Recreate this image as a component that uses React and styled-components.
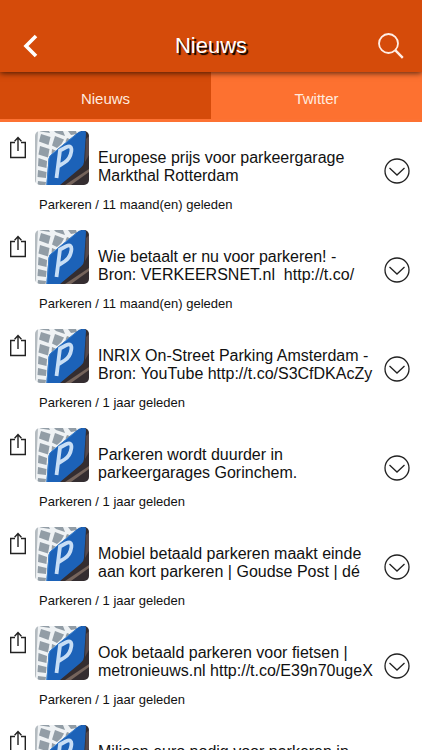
import React from 'react';
import styled, {createGlobalStyle} from 'styled-components';

const GlobalStyle = createGlobalStyle`
  * {
    box-sizing: border-box;
  }
  body {
    margin: 0;
    background: #fff;
    color: #111;
    font-family: 'Liberation Sans', Arial, Helvetica, sans-serif;
  }
  button {
    margin: 0;
    padding: 0;
    border: 0;
    background: none;
    color: inherit;
    font: inherit;
    cursor: pointer;
  }
`;

const Screen = styled.div`
  display: flex;
  flex-direction: column;
  height: 100vh;
  overflow: hidden;
`;

const Header = styled.header`
  position: relative;
  z-index: 1;
  flex: none;
  display: grid;
  grid-template-columns: 48px 1fr 48px;
  align-items: center;
  padding: 20px 7px 0;
  height: 72px;
  background: #d54b0a;
  color: #fff;
  box-shadow: 0 1px 6px rgba(0, 0, 0, 0.7);
`;

const Title = styled.h1`
  margin: 0;
  text-align: center;
  font-size: 22px;
  font-weight: normal;
  line-height: 26px;
  text-shadow: 2px 2px 1px #000;
`;

const HeaderButton = styled.button`
  display: flex;
  justify-content: center;
`;

const Tabs = styled.nav`
  flex: none;
  display: grid;
  grid-template-columns: 1fr 1fr;
  border-bottom: 3px solid #fd7233;
`;

const Tab = styled.button`
  height: 47px;
  padding-top: 6px;
  background: ${props => (props.$active ? '#d54b0a' : '#fd7130')};
  color: #ffeadf;
  font-size: 15px;
`;

const List = styled.main`
  flex: 1;
  min-height: 0;
  padding-top: 9px;
  overflow-y: auto;
  scrollbar-width: none;
`;

const Item = styled.article`
  display: grid;
  grid-template-columns: 35px 54px 1fr 46px;
  grid-template-rows: 54px 45px;
`;

const ShareButton = styled.button`
  place-self: start;
  padding: 5px 0 0 9px;
  line-height: 0;
`;

const Headline = styled.h2`
  align-self: end;
  display: -webkit-box;
  -webkit-box-orient: vertical;
  -webkit-line-clamp: 2;
  overflow: hidden;
  margin: 0 0 0 9px;
  font-size: 16px;
  font-weight: normal;
  line-height: 18px;
`;

const ExpandButton = styled.button`
  place-self: end start;
  padding: 0 0 1px 8px;
  line-height: 0;
`;

const Meta = styled.p`
  grid-column: 2 / -1;
  margin: 12px 0 0 4px;
  font-size: 13px;
  line-height: 16px;
`;

const Thumb = styled.svg`
  display: block;
  width: 54px;
  height: 54px;
  border-radius: 5px;
`;

const BackIcon = () => (
  <svg width="16" height="24" viewBox="0 0 16 24" fill="none" stroke="#fff" strokeWidth="3.6">
    <path d="M13 2L3 12l10 10" />
  </svg>
);

const SearchIcon = () => (
  <svg width="26" height="26" viewBox="0 0 26 26" fill="none" stroke="#ffeee6" strokeWidth="1.8">
    <circle cx="10.5" cy="10.5" r="9.5" />
    <path d="M17.2 17.2l7.6 7.6" strokeWidth="2.4" />
  </svg>
);

const ShareIcon = () => (
  <svg width="18" height="23" viewBox="0 0 18 23" fill="none" stroke="#222" strokeWidth="1.4">
    <path d="M6 6.5H1.7v15h14.6v-15H12M9 15V2M5.6 5.2L9 1.6l3.4 3.6" />
  </svg>
);

const ExpandIcon = () => (
  <svg width="26" height="26" viewBox="0 0 26 26" fill="none" stroke="#222" strokeWidth="1.3">
    <circle cx="13" cy="13" r="12" />
    <path d="M5.5 10l7.5 7 7.5-7" />
  </svg>
);

const ParkingThumb = () => (
  <Thumb viewBox="0 0 54 54" role="img" aria-label="Parkeerbord">
    <rect width="54" height="54" fill="#eff2f4" />
    <path d="M0 0H3L1.5 30 1 54H0z" fill="#b4bbc0" />
    <g fill="#929da6">
      <path d="M5 0H14L15 2 5.5 0.5z" />
      <path d="M19 0H28L30 5 21 2z" />
      <path d="M33 0H41L42 3 36 4z" />
      <path d="M6 3L15.5 6 13.5 14 4 10.5z" />
      <path d="M20 5L29 8.5 26.5 13 22 17 17 14.5z" />
      <path d="M32 7L36 8.5 32 11 30.5 10.5z" />
      <path d="M5 15L14.5 18 13 26.5 3.5 23.5z" />
      <path d="M17 18L20.5 19.5 16.5 23z" />
      <path d="M3.5 27L12 30 11.5 37 3 35z" />
      <path d="M3 39L11.5 41 11 47 2.5 46z" />
      <path d="M3 50L11 51 10.5 54H2.5z" />
    </g>
    <path d="M46 0H54V54H22z" fill="#342d30" />
    <path d="M51 8L54 5V24L50 31z" fill="#57494a" />
    <path d="M30 54L54 38V41L36 54z" fill="#75645c" />
    <path d="M41 3Q44 0 47 0H49.5Q51 0 51 2L49 31Q48.8 34.5 46 36.5L25 54H11.5L13.5 28Q13.8 25.5 16 23.7z" fill="#1c62b8" />
    <path d="M41 3.5L16 24Q14.4 25.5 14.1 28L11.8 54" fill="none" stroke="#3b80cd" strokeWidth="1" />
    <path d="M21.5 47L25 19.5L31 16.3Q37.3 13.5 36.3 20.5Q35.2 28 29.5 31.5L23.7 35" fill="none" stroke="#c8def5" strokeWidth="3.8" />
  </Thumb>
);

const items = [
  {id: 1, title: 'Europese prijs voor parkeergarage Markthal Rotterdam', age: '11 maand(en) geleden'},
  {id: 2, title: 'Wie betaalt er nu voor parkeren! - Bron: VERKEERSNET.nl\u00a0 http://t.co/', age: '11 maand(en) geleden'},
  {id: 3, title: 'INRIX On-Street Parking Amsterdam - Bron: YouTube http://t.co/S3CfDKAcZy', age: '1 jaar geleden'},
  {id: 4, title: 'Parkeren wordt duurder in parkeergarages Gorinchem.', age: '1 jaar geleden'},
  {id: 5, title: 'Mobiel betaald parkeren maakt einde aan kort parkeren | Goudse Post | dé', age: '1 jaar geleden'},
  {id: 6, title: 'Ook betaald parkeren voor fietsen | metronieuws.nl http://t.co/E39n70ugeX', age: '1 jaar geleden'},
  {id: 7, title: 'Miljoen euro nodig voor parkeren in binnenstad', age: '1 jaar geleden'},
];

const NewsItem = ({item}) => (
  <Item>
    <ShareButton aria-label="Delen">
      <ShareIcon />
    </ShareButton>
    <ParkingThumb />
    <Headline>{item.title}</Headline>
    <ExpandButton aria-label="Meer">
      <ExpandIcon />
    </ExpandButton>
    <Meta>Parkeren / {item.age}</Meta>
  </Item>
);

const App = () => (
  <Screen>
    <GlobalStyle />
    <Header>
      <HeaderButton aria-label="Terug">
        <BackIcon />
      </HeaderButton>
      <Title>Nieuws</Title>
      <HeaderButton aria-label="Zoeken">
        <SearchIcon />
      </HeaderButton>
    </Header>
    <Tabs>
      <Tab $active>Nieuws</Tab>
      <Tab>Twitter</Tab>
    </Tabs>
    <List>
      {items.map(item => (
        <NewsItem key={item.id} item={item} />
      ))}
    </List>
  </Screen>
);

export default App;
